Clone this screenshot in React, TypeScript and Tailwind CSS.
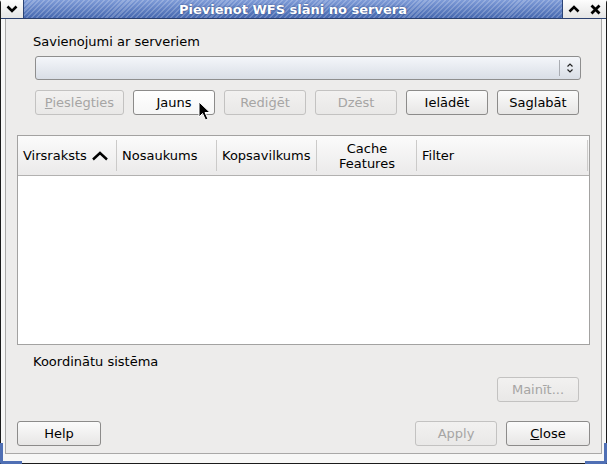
import React from 'react';

type BtnProps = {
  label: React.ReactNode;
  width: string;
  disabled?: boolean;
  hover?: boolean;
};

const Button: React.FC<BtnProps> = ({ label, width, disabled, hover }) => {
  const base = 'h-[25px] rounded-[3px] border flex items-center justify-center leading-none shrink-0';
  const look = disabled
    ? 'border-[#c3c2c1] text-[#a6a5a4] bg-[linear-gradient(#f2f1f0,#e9e8e7)]'
    : hover
    ? 'border-[#8c8b8a] text-black bg-[linear-gradient(#ffffff,#f6f6f6)]'
    : 'border-[#8c8b8a] text-black bg-[linear-gradient(#fbfbfb,#e7e6e5)]';
  return <div className={`${base} ${look} ${width}`}>{label}</div>;
};

const Col: React.FC<{ w: string; children?: React.ReactNode; center?: boolean }> = ({ w, children, center }) => (
  <div className={`relative h-full flex items-center shrink-0 ${center ? 'justify-center text-center' : 'pl-[5px]'} ${w}`}>
    {children}
    <div className="absolute right-0 top-[4px] bottom-[4px] w-px bg-[#cbcac9]" />
  </div>
);

export default function App() {
  return (
    <div className="w-[607px] h-[464px] relative overflow-hidden bg-[#f7f7f6] font-['DejaVu_Sans',sans-serif] text-[13px] text-black">
      <div className="h-full flex flex-col border-l border-r border-b border-[#1b1b1b] rounded-t-[3px]">
        {/* title bar */}
        <div className="h-[19px] flex shrink-0 border-b border-[#2a3f6e]">
          <div className="w-[22px] flex items-center justify-center bg-[linear-gradient(#fdfdfd,#e4e4e4)]">
            <svg width="12" height="8" viewBox="0 0 12 8">
              <path d="M1.5 1.5 L6 6 L10.5 1.5" fill="none" stroke="#000" strokeWidth="2.6" />
            </svg>
          </div>
          <div className="flex-1 flex items-center justify-center border-l border-[#2c4477] bg-[repeating-linear-gradient(135deg,rgba(255,255,255,0.2)_0px,rgba(255,255,255,0.2)_1.5px,transparent_1.5px,transparent_3.5px),linear-gradient(#7f9cd8,#4668b0)]">
            <span className="font-bold text-white text-[13px] leading-none [text-shadow:0_0_2px_#27407a]">Pievienot WFS slāni no servera</span>
          </div>
          <div className="w-[44px] flex items-center bg-[linear-gradient(#fdfdfd,#e4e4e4)] border-l border-[#2c4477]">
            <div className="w-[22px] flex justify-center">
              <svg width="12" height="8" viewBox="0 0 12 8">
                <path d="M1.5 6.5 L6 2 L10.5 6.5" fill="none" stroke="#000" strokeWidth="2.6" />
              </svg>
            </div>
            <div className="w-[22px] flex justify-center">
              <svg width="11" height="11" viewBox="0 0 11 11">
                <path d="M1.5 1.5 L9.5 9.5 M9.5 1.5 L1.5 9.5" fill="none" stroke="#000" strokeWidth="2.8" />
              </svg>
            </div>
          </div>
        </div>

        {/* window frame */}
        <div className="flex-1 px-[4px] pb-[9px] flex">
          <div className="flex-1 min-w-0 flex flex-col bg-[#edeceb] border-l border-r border-b border-[#a9a8a7]">
            {/* connections */}
            <div className="pl-[27px] pr-[20px] pt-[15px]">
              <div className="h-[16px] leading-[16px]">Savienojumi ar serveriem</div>
              <div className="ml-[2px] mt-[6px] h-[24px] rounded-[3px] border border-[#8e8e8e] bg-[linear-gradient(#f4f6fa,#d9dee6)] flex items-center justify-end">
                <div className="h-[16px] w-px bg-[#a9acb2]" />
                <div className="w-[20px] flex justify-center">
                  <svg width="8" height="12" viewBox="0 0 8 12">
                    <path d="M1.5 4.5 L4 2 L6.5 4.5 M1.5 7.5 L4 10 L6.5 7.5" fill="none" stroke="#222" strokeWidth="1.2" />
                  </svg>
                </div>
              </div>
              <div className="ml-[2px] mt-[10px] flex gap-[9px]">
                <Button width="w-[89px]" disabled label={<span><span className="underline">P</span>ieslēgties</span>} />
                <Button width="w-[82px]" hover label={<span><span className="underline">J</span>auns</span>} />
                <Button width="w-[82px]" disabled label="Rediģēt" />
                <Button width="w-[82px]" disabled label="Dzēst" />
                <Button width="w-[82px]" label="Ielādēt" />
                <Button width="w-[82px]" label="Saglabāt" />
              </div>
            </div>

            {/* layers table */}
            <div className="mt-[20px] ml-[11px] mr-[11px] h-[210px] border border-[#a3a2a1] bg-white flex flex-col overflow-hidden">
              <div className="h-[40px] flex border-b border-[#b2b1b0] bg-[linear-gradient(#fbfbfb,#ebeaea)]">
                <Col w="w-[99px]">
                  <span>Virsraksts</span>
                  <svg className="ml-[4px]" width="18" height="10" viewBox="0 0 18 10">
                    <path d="M2 8.5 L9 2 L16 8.5" fill="none" stroke="#000" strokeWidth="2.4" />
                  </svg>
                </Col>
                <Col w="w-[100px]">Nosaukums</Col>
                <Col w="w-[100px]">Kopsavilkums</Col>
                <Col w="w-[100px]" center>
                  <span className="leading-[15px]">Cache<br />Features</span>
                </Col>
                <Col w="w-[171px]">Filter</Col>
                <div className="flex-1 min-w-0" />
              </div>
              <div className="flex-1" />
            </div>

            {/* coordinate system */}
            <div className="pl-[27px] mt-[9px] h-[16px] leading-[16px]">Koordinātu sistēma</div>
            <div className="mt-[7px] mr-[22px] flex justify-end">
              <Button width="w-[82px]" disabled label="Mainīt..." />
            </div>

            {/* dialog buttons */}
            <div className="mt-[19px] ml-[11px] mr-[11px] flex gap-[9px]">
              <Button width="w-[84px]" label="Help" />
              <div className="flex-1" />
              <Button width="w-[82px]" disabled label="Apply" />
              <Button width="w-[84px]" label={<span><span className="underline">C</span>lose</span>} />
            </div>
          </div>
        </div>
      </div>

      {/* blue corner handles */}
      <div className="absolute left-0 bottom-0 w-[22px] h-[21px] border-l-[3px] border-b-[3px] border-[#4f6fb4] rounded-bl-[2px]" />
      <div className="absolute right-0 bottom-0 w-[22px] h-[21px] border-r-[3px] border-b-[3px] border-[#4f6fb4] rounded-br-[2px]" />

      {/* mouse pointer */}
      <svg className="absolute left-[198px] top-[101px]" width="14" height="21" viewBox="0 0 14 21">
        <path d="M1 1 L1 16 L4.5 12.5 L7.5 19 L10 18 L7 11.5 L12 11.5 Z" fill="#000" stroke="#fff" strokeWidth="1" />
      </svg>
    </div>
  );
}
